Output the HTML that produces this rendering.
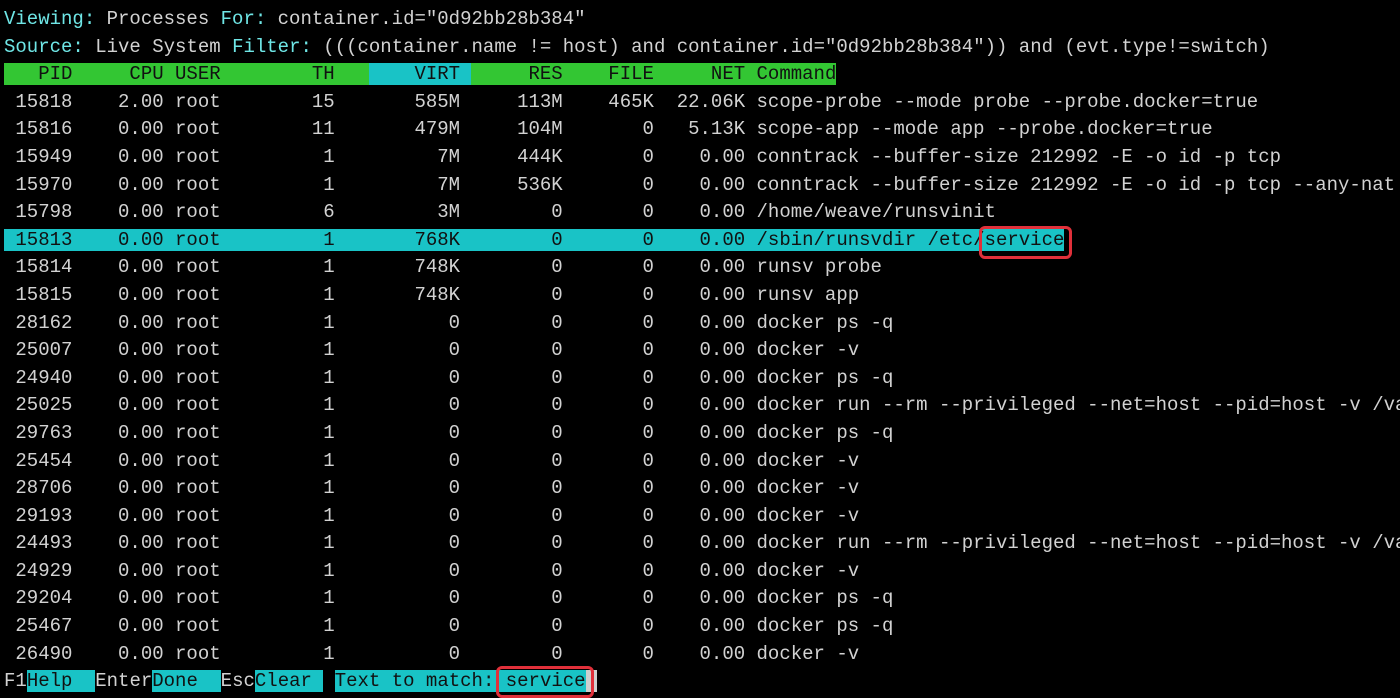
<!DOCTYPE html>
<html><head><meta charset="utf-8"><style>
html,body{margin:0;padding:0;background:#000;width:1400px;height:691px;overflow:hidden}
#t{position:absolute;left:4px;top:6px;font-family:"Liberation Mono",monospace;font-size:19px;color:#d2d2d2;}
.r{height:27.6px;line-height:27.6px;width:1500px;white-space:pre}
.l{color:#6fe6e6}
.g{background:#33c633;color:#111}
.c{background:#19c3c6;color:#111}
.box{position:absolute;border:3px solid #e0303a;border-radius:6px}
</style></head><body>
<div id="t">
<div class="r"><span class="l">Viewing:</span> Processes <span class="l">For:</span> container.id="0d92bb28b384"</div>
<div class="r"><span class="l">Source:</span> Live System <span class="l">Filter:</span> (((container.name != host) and container.id="0d92bb28b384")) and (evt.type!=switch)</div>
<div class="r"><span class="g">   PID     CPU USER        TH   </span><span class="c">    VIRT </span><span class="g">     RES    FILE     NET Command</span></div>
<div class="r"> 15818    2.00 root        15       585M     113M    465K  22.06K scope-probe --mode probe --probe.docker=true</div>
<div class="r"> 15816    0.00 root        11       479M     104M       0   5.13K scope-app --mode app --probe.docker=true</div>
<div class="r"> 15949    0.00 root         1         7M     444K       0    0.00 conntrack --buffer-size 212992 -E -o id -p tcp</div>
<div class="r"> 15970    0.00 root         1         7M     536K       0    0.00 conntrack --buffer-size 212992 -E -o id -p tcp --any-nat</div>
<div class="r"> 15798    0.00 root         6         3M        0       0    0.00 /home/weave/runsvinit</div>
<div class="r"><span class="c"> 15813    0.00 root         1       768K        0       0    0.00 /sbin/runsvdir /etc/service</span></div>
<div class="r"> 15814    0.00 root         1       748K        0       0    0.00 runsv probe</div>
<div class="r"> 15815    0.00 root         1       748K        0       0    0.00 runsv app</div>
<div class="r"> 28162    0.00 root         1          0        0       0    0.00 docker ps -q</div>
<div class="r"> 25007    0.00 root         1          0        0       0    0.00 docker -v</div>
<div class="r"> 24940    0.00 root         1          0        0       0    0.00 docker ps -q</div>
<div class="r"> 25025    0.00 root         1          0        0       0    0.00 docker run --rm --privileged --net=host --pid=host -v /va</div>
<div class="r"> 29763    0.00 root         1          0        0       0    0.00 docker ps -q</div>
<div class="r"> 25454    0.00 root         1          0        0       0    0.00 docker -v</div>
<div class="r"> 28706    0.00 root         1          0        0       0    0.00 docker -v</div>
<div class="r"> 29193    0.00 root         1          0        0       0    0.00 docker -v</div>
<div class="r"> 24493    0.00 root         1          0        0       0    0.00 docker run --rm --privileged --net=host --pid=host -v /va</div>
<div class="r"> 24929    0.00 root         1          0        0       0    0.00 docker -v</div>
<div class="r"> 29204    0.00 root         1          0        0       0    0.00 docker ps -q</div>
<div class="r"> 25467    0.00 root         1          0        0       0    0.00 docker ps -q</div>
<div class="r"> 26490    0.00 root         1          0        0       0    0.00 docker -v</div>
<div class="r">F1<span class="c">Help  </span>Enter<span class="c">Done  </span>Esc<span class="c">Clear </span> <span class="c">Text to match: service</span><span style="background:#cfcfcf"> </span></div>
</div>
<div class="box" style="left:979px;top:226px;width:87px;height:27px"></div>
<div class="box" style="left:496px;top:666px;width:92px;height:26px"></div>
</body></html>
